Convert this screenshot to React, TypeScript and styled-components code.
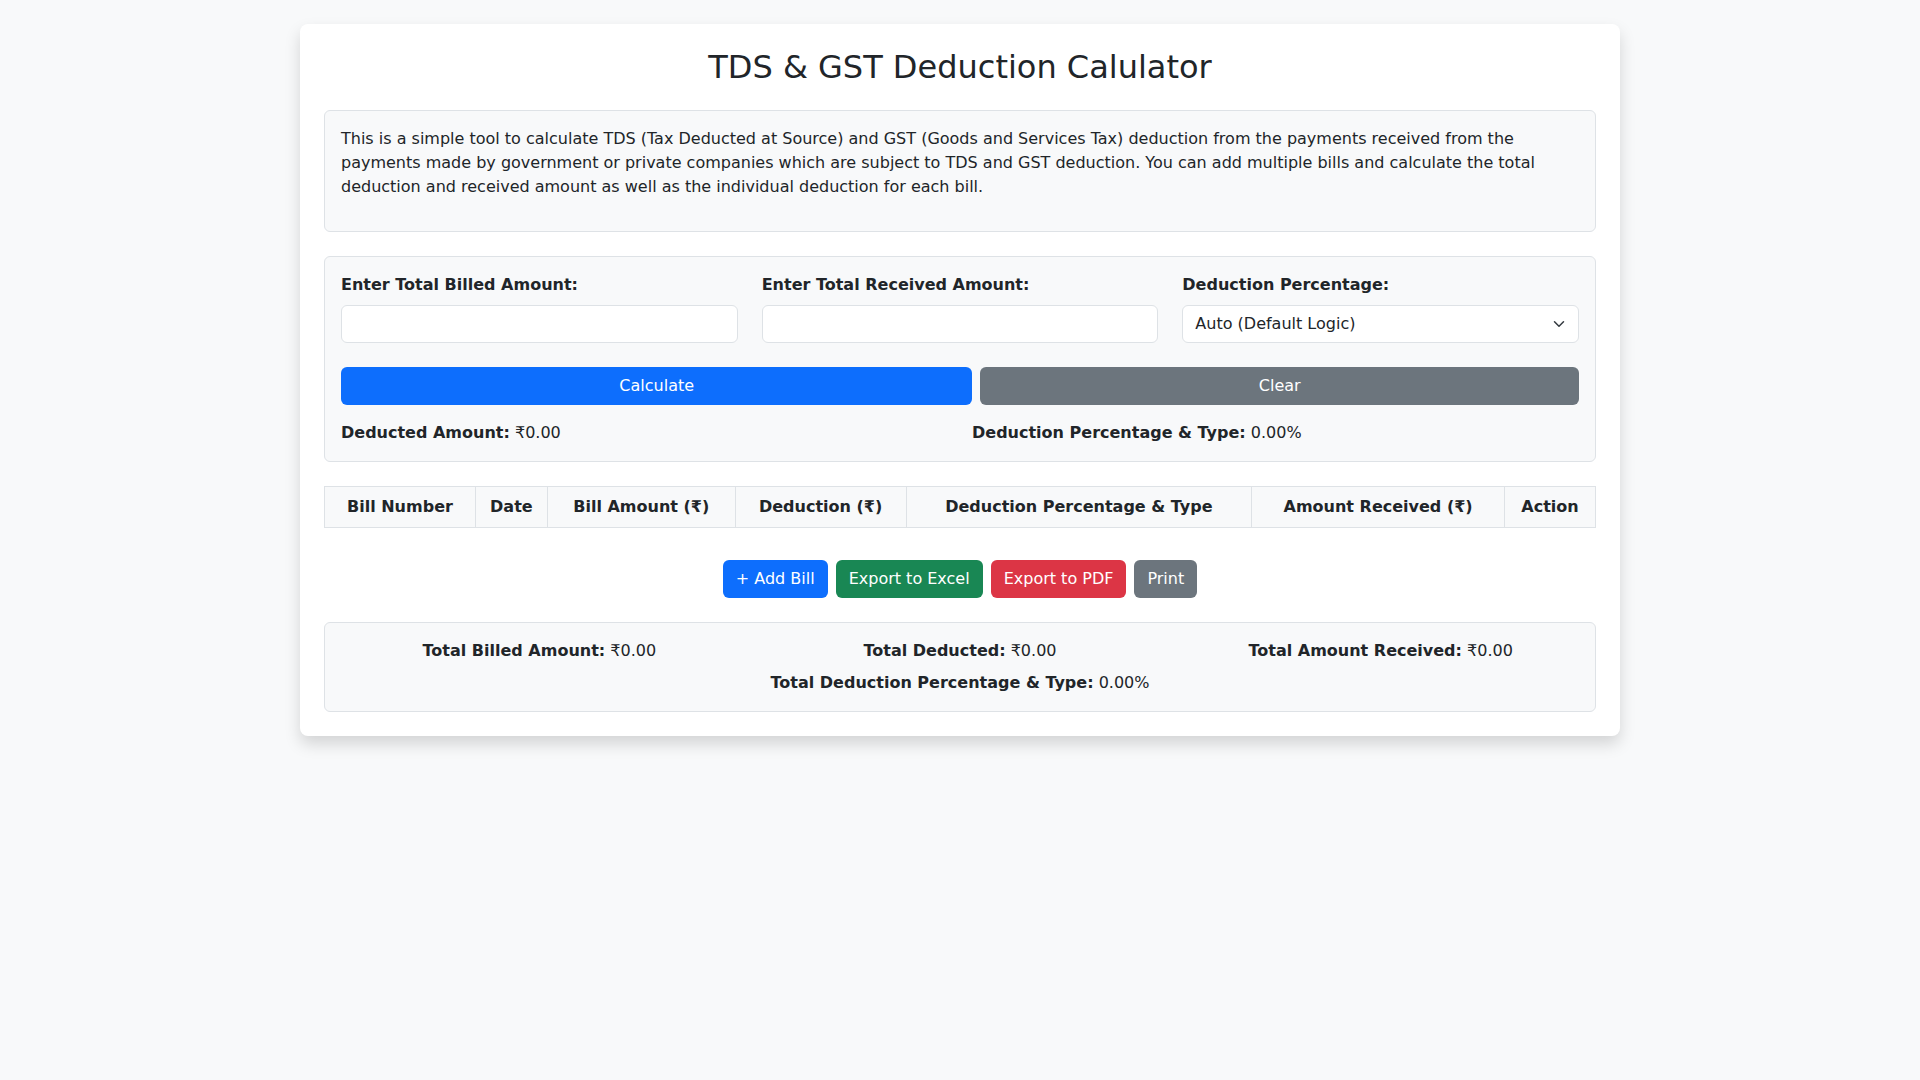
import React, { useState } from 'react';
import styled, { createGlobalStyle } from 'styled-components';

const GlobalStyle = createGlobalStyle`
  * { box-sizing: border-box; }
  body {
    margin: 0;
    background: #f8f9fa;
    color: #212529;
    font-family: "DejaVu Sans", "Liberation Sans", sans-serif;
    font-size: 16px;
    line-height: 1.5;
  }
`;

const Container = styled.div`
  max-width: 1320px;
  margin: 24px auto;
`;

const Card = styled.div`
  background: #fff;
  border-radius: 8px;
  box-shadow: 0 0.5rem 1rem rgba(0, 0, 0, 0.15);
  padding: 24px;
  display: flex;
  flex-direction: column;
  gap: 24px;
`;

const Title = styled.h2`
  margin: 0;
  font-size: 32px;
  font-weight: 500;
  line-height: 1.2;
  text-align: center;
`;

// caja gris clara con borde
const Panel = styled.div`
  background: #f8f9fa;
  border: 1px solid #dee2e6;
  border-radius: 6px;
  padding: 16px;
`;

const Intro = styled.p`
  margin: 0 0 16px;
`;

const FormGrid = styled.div`
  display: grid;
  grid-template-columns: repeat(3, 1fr);
  column-gap: 24px;
  margin-bottom: 24px;
`;

const Field = styled.div`
  display: flex;
  flex-direction: column;
`;

const Label = styled.label`
  font-weight: 700;
  margin-bottom: 8px;
`;

const Input = styled.input`
  height: 38px;
  padding: 6px 12px;
  border: 1px solid #dee2e6;
  border-radius: 6px;
  background: #fff;
  font: inherit;
  color: #212529;
`;

const SelectWrap = styled.div`
  position: relative;
`;

const Select = styled.select`
  width: 100%;
  height: 38px;
  padding: 6px 36px 6px 12px;
  border: 1px solid #dee2e6;
  border-radius: 6px;
  background: #fff;
  font: inherit;
  color: #212529;
  appearance: none;
`;

const Chevron = styled.svg`
  position: absolute;
  right: 12px;
  top: 13px;
  width: 16px;
  height: 12px;
  pointer-events: none;
`;

const ButtonRow = styled.div`
  display: flex;
  gap: 8px;
  margin-bottom: 16px;
`;

const Button = styled.button<{ $variant: string; $fill?: boolean }>`
  flex: ${({ $fill }) => ($fill ? '1 1 auto' : '0 0 auto')};
  height: 38px;
  padding: 6px 12px;
  border: 1px solid transparent;
  border-radius: 6px;
  font: inherit;
  color: #fff;
  cursor: pointer;
  background: ${({ $variant }) =>
    ({ primary: '#0d6efd', secondary: '#6c757d', success: '#198754', danger: '#dc3545' } as Record<string, string>)[$variant]};
`;

const ResultGrid = styled.div`
  display: grid;
  grid-template-columns: 1fr 1fr;
  column-gap: 24px;
`;

const Table = styled.table`
  width: 100%;
  border-collapse: collapse;
`;

const HeaderCell = styled.th<{ $width: number }>`
  width: ${({ $width }) => $width}px;
  padding: 8px;
  background: #f8f9fa;
  border: 1px solid #dee2e6;
  text-align: center;
  font-weight: 700;
`;

const Actions = styled.div`
  display: flex;
  justify-content: center;
  gap: 8px;
  margin-top: 32px;
`;

const SummaryGrid = styled.div`
  display: grid;
  grid-template-columns: repeat(3, 1fr);
  column-gap: 24px;
  text-align: center;
`;

const SummaryLine = styled.div`
  text-align: center;
  margin-top: 8px;
`;

const columns = [
  { label: 'Bill Number', width: 151 },
  { label: 'Date', width: 72 },
  { label: 'Bill Amount (₹)', width: 188 },
  { label: 'Deduction (₹)', width: 171 },
  { label: 'Deduction Percentage & Type', width: 346 },
  { label: 'Amount Received (₹)', width: 253 },
  { label: 'Action', width: 91 },
];

export default function App() {
  const [billed, setBilled] = useState('');
  const [received, setReceived] = useState('');

  return (
    <Container>
      <GlobalStyle />
      <Card>
        <Title>TDS &amp; GST Deduction Calulator</Title>

        <Panel>
          <Intro>
            This is a simple tool to calculate TDS (Tax Deducted at Source) and GST (Goods and Services Tax) deduction
            from the payments received from the payments made by government or private companies which are subject to
            TDS and GST deduction. You can add multiple bills and calculate the total deduction and received amount as
            well as the individual deduction for each bill.
          </Intro>
        </Panel>

        <Panel>
          <FormGrid>
            <Field>
              <Label>Enter Total Billed Amount:</Label>
              <Input value={billed} onChange={(e) => setBilled(e.target.value)} />
            </Field>
            <Field>
              <Label>Enter Total Received Amount:</Label>
              <Input value={received} onChange={(e) => setReceived(e.target.value)} />
            </Field>
            <Field>
              <Label>Deduction Percentage:</Label>
              <SelectWrap>
                <Select defaultValue="auto">
                  <option value="auto">Auto (Default Logic)</option>
                </Select>
                <Chevron viewBox="0 0 16 16">
                  <path d="m2 5 6 6 6-6" fill="none" stroke="#343a40" strokeWidth="2" strokeLinecap="round" strokeLinejoin="round" />
                </Chevron>
              </SelectWrap>
            </Field>
          </FormGrid>
          <ButtonRow>
            <Button $variant="primary" $fill>Calculate</Button>
            <Button $variant="secondary" $fill>Clear</Button>
          </ButtonRow>
          <ResultGrid>
            <div><strong>Deducted Amount:</strong> ₹0.00</div>
            <div><strong>Deduction Percentage &amp; Type:</strong> 0.00%</div>
          </ResultGrid>
        </Panel>

        <div>
          <Table>
            <thead>
              <tr>
                {columns.map((c) => (
                  <HeaderCell key={c.label} $width={c.width}>{c.label}</HeaderCell>
                ))}
              </tr>
            </thead>
            <tbody />
          </Table>
          <Actions>
            <Button $variant="primary">+ Add Bill</Button>
            <Button $variant="success">Export to Excel</Button>
            <Button $variant="danger">Export to PDF</Button>
            <Button $variant="secondary">Print</Button>
          </Actions>
        </div>

        <Panel>
          <SummaryGrid>
            <div><strong>Total Billed Amount:</strong> ₹0.00</div>
            <div><strong>Total Deducted:</strong> ₹0.00</div>
            <div><strong>Total Amount Received:</strong> ₹0.00</div>
          </SummaryGrid>
          <SummaryLine><strong>Total Deduction Percentage &amp; Type:</strong> 0.00%</SummaryLine>
        </Panel>
      </Card>
    </Container>
  );
}
